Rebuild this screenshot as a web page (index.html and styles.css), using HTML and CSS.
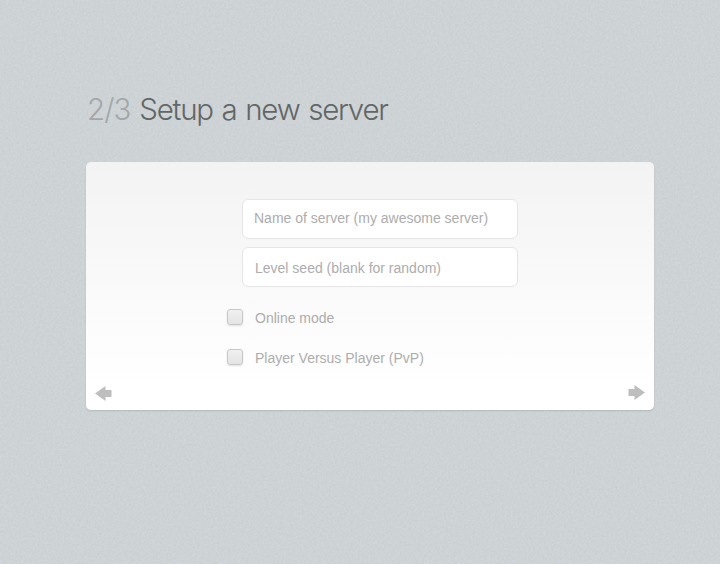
FILE: index.html
```html
<!DOCTYPE html>
<html lang="en">
<head>
<meta charset="utf-8">
<title>Setup a new server</title>
<link rel="stylesheet" href="styles.css">
</head>
<body>
<svg class="grain" width="720" height="564" aria-hidden="true">
  <filter id="noise" x="0" y="0" width="100%" height="100%" color-interpolation-filters="sRGB">
    <feTurbulence type="fractalNoise" baseFrequency="0.45" numOctaves="3" seed="4"/>
    <feColorMatrix values="0.05 0 0 0 0.78  0.05 0 0 0 0.8  0.05 0 0 0 0.812  0 0 0 0 1"/>
  </filter>
  <rect width="720" height="564" filter="url(#noise)"/>
</svg>
<main class="setup">
  <h1 class="title"><span class="step">2/3</span> <span class="name">Setup a new server</span></h1>
  <form class="card">
    <div class="fields">
      <input class="field first" type="text" placeholder="Name of server (my awesome server)">
      <input class="field" type="text" placeholder="Level seed (blank for random)">
    </div>
    <div class="options">
      <label class="option"><input class="check" type="checkbox"><span>Online mode</span></label>
      <label class="option"><input class="check" type="checkbox"><span>Player Versus Player (PvP)</span></label>
    </div>
    <nav class="nav">
      <svg class="arrow" width="17" height="16" viewBox="0 0 17 16"><path d="M0 8.5 10.5 1V5H16.5V12H10.5V16Z"/></svg>
      <svg class="arrow next" width="17" height="16" viewBox="0 0 17 16"><path d="M17 8.5 6.5 1V5H0.5V12H6.5V16Z"/></svg>
    </nav>
  </form>
</main>
</body>
</html>
```
FILE: styles.css
```css
* { box-sizing: border-box; }
body {
  margin: 0;
  height: 564px;
  overflow: hidden;
  background: #ced3d6;
  font-family: "Liberation Sans", Arial, sans-serif;
  font-size: 14px;
}
.grain { position: absolute; inset: 0; z-index: -1; }
.setup { width: 568px; margin-left: 86px; padding-top: 89px; }
.title {
  margin: 0 0 33px 1px;
  height: 40px;
  line-height: 40px;
  font-family: Inter, "Liberation Sans", sans-serif;
  font-size: 29.5px;
  font-weight: 300;
  letter-spacing: -1.22px;
  word-spacing: 1.6px;
  white-space: nowrap;
  color: #626666;
}
.step { color: #a3a7a9; letter-spacing: -0.9px; }
.card {
  display: flex;
  flex-direction: column;
  height: 248px;
  padding: 37px 9px 0;
  border-radius: 5px;
  background: linear-gradient(#f3f3f3, #fff 90%);
  box-shadow: 0 1px 2px rgba(0, 0, 0, 0.13);
}
.fields { display: flex; flex-direction: column; gap: 8px; margin-left: 147px; }
.field {
  width: 276px;
  height: 40px;
  padding: 2px 12px 0;
  border: 1px solid #e5e5e5;
  border-radius: 6px;
  background: #fff;
  font: inherit;
  outline: none;
}
.first { padding: 0 11px 2px; }
.field::placeholder { color: #adadad; opacity: 1; }
.options { display: flex; flex-direction: column; gap: 24px; margin: 22px 0 0 132px; }
.option { display: flex; align-items: flex-start; gap: 12px; height: 16px; line-height: 18px; color: #adadad; }
.check {
  appearance: none;
  width: 16px;
  height: 16px;
  margin: 0;
  border: 1px solid #c8c8c8;
  border-radius: 3px;
  background: linear-gradient(#f0f0f0, #e4e4e4);
  box-shadow: 0 1px 2px rgba(0, 0, 0, 0.12);
}
.nav { display: flex; justify-content: space-between; margin-top: 20px; }
.arrow { fill: #bebebe; }
.next { margin-top: -1px; }
```
